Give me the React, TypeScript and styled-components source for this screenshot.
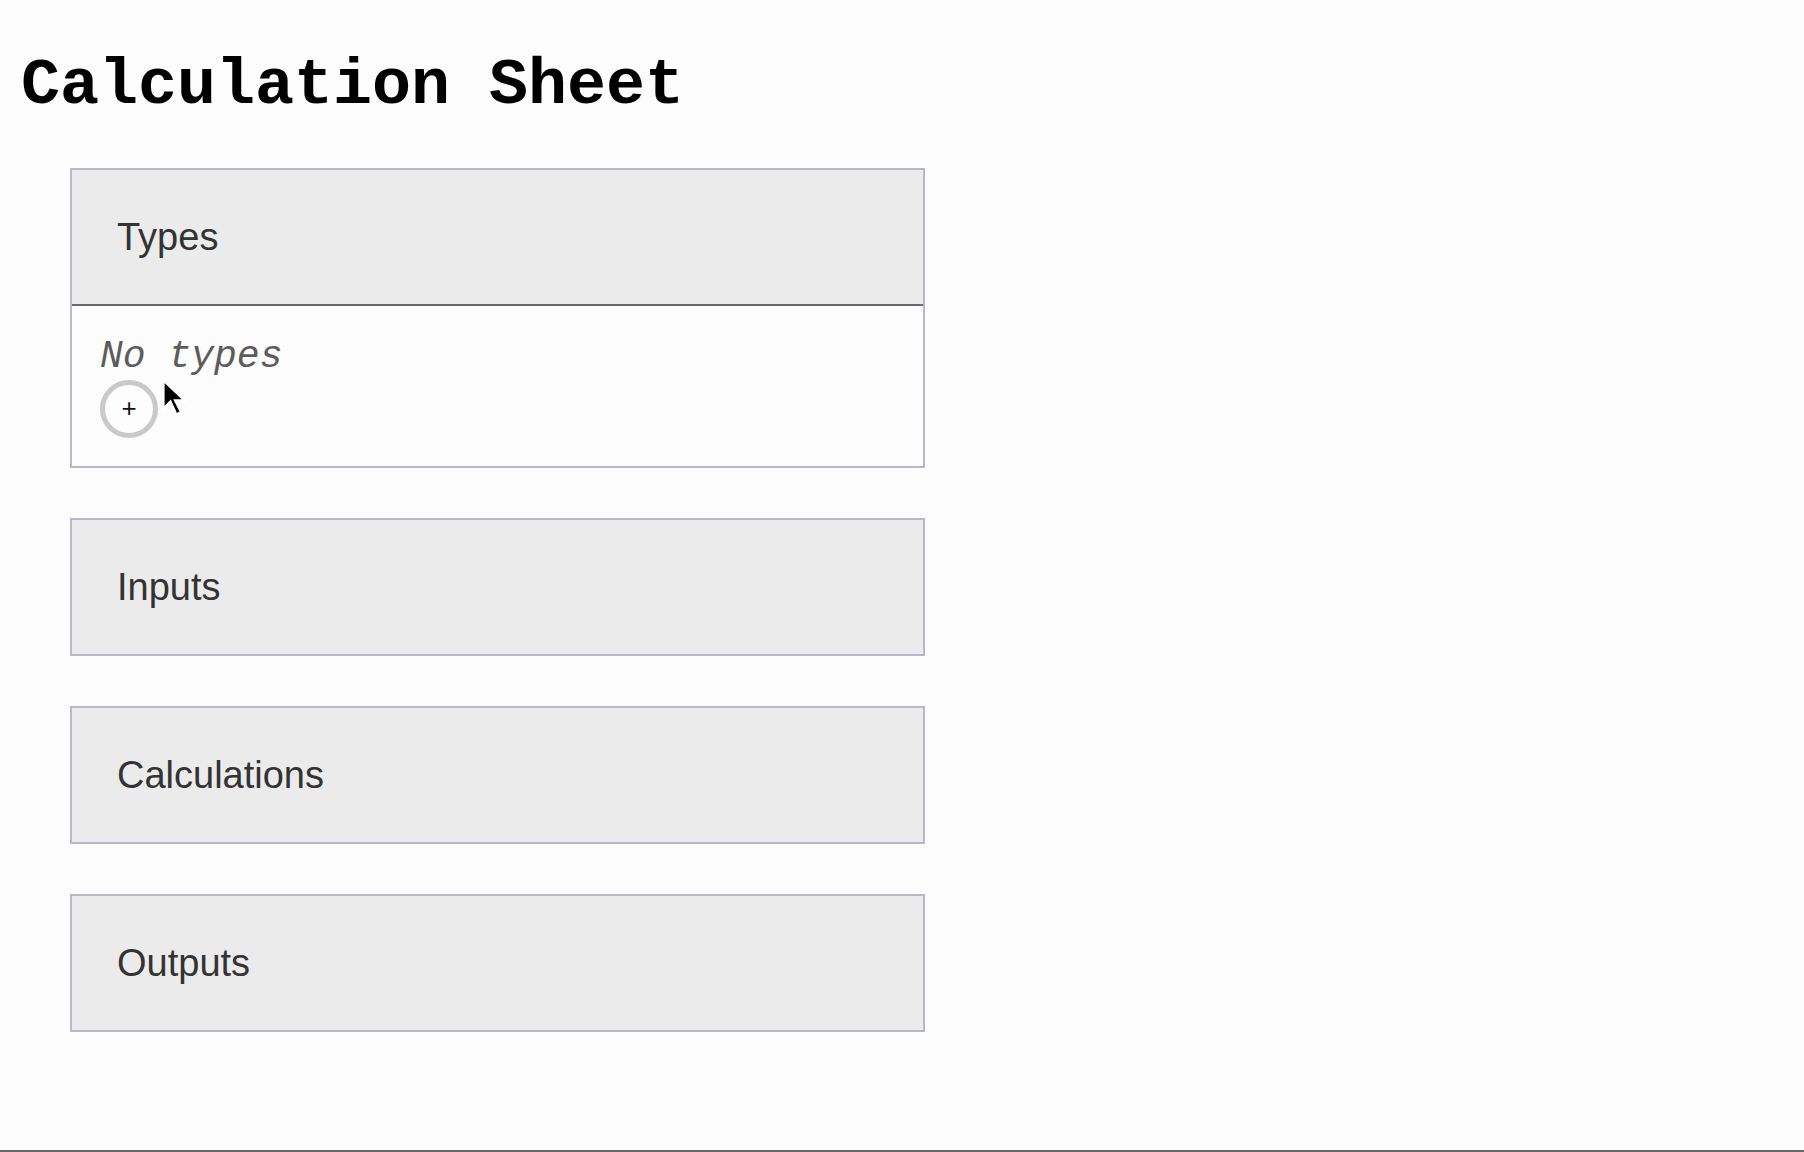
import React, { useState } from 'react'
import styled, { createGlobalStyle } from 'styled-components'

const GlobalStyle = createGlobalStyle`
  html, body {
    margin: 0;
    padding: 0;
    background-color: #fcfcfc;
  }
`

const Page = styled.div`
  box-sizing: border-box;
  min-height: 100vh;
  padding: 0 16px 40px;
  border-bottom: 2px solid #6a6a6a;
`

const Title = styled.h1`
  margin: 0 0 0 5px;
  padding-top: 54px;
  font-family: 'Liberation Mono', 'Courier New', monospace;
  font-size: 65px;
  line-height: 64px;
  font-weight: bold;
  color: #000;
`

const Sections = styled.div`
  display: flex;
  flex-direction: column;
  gap: 50px;
  width: 855px;
  margin: 50px 0 0 54px;
`

const Panel = styled.section`
  border: 2px solid #b6b6cc;
  background-color: #fcfcfc;
`

const PanelHeader = styled.div<{ $open: boolean }>`
  display: flex;
  align-items: center;
  height: 134px;
  padding-left: 45px;
  background-color: #ebebeb;
  border-bottom: ${p => (p.$open ? '2px solid #6a6a6a' : 'none')};
  font-family: 'Liberation Sans', Arial, sans-serif;
  font-size: 38px;
  color: #333;
  cursor: pointer;
`

const PanelBody = styled.div`
  position: relative;
  display: flex;
  flex-direction: column;
  align-items: flex-start;
  gap: 3px;
  padding: 31px 28px 28px;
`

const EmptyText = styled.div`
  font-family: 'Liberation Mono', 'Courier New', monospace;
  font-style: italic;
  font-size: 38px;
  line-height: 40px;
  color: #5c5c5c;
`

const AddButton = styled.button`
  box-sizing: border-box;
  width: 58px;
  height: 58px;
  border-radius: 50%;
  border: 5px solid #c9c9c9;
  background: #fdfdfd;
  font-family: 'Liberation Sans', Arial, sans-serif;
  font-size: 26px;
  line-height: 1;
  color: #111;
  padding: 0 0 2px;
  display: flex;
  align-items: center;
  justify-content: center;
`

const Cursor = styled.svg`
  position: absolute;
  left: 89px;
  top: 72px;
  width: 26px;
  height: 40px;
`

const sections = ['Types', 'Inputs', 'Calculations', 'Outputs']

export default function App() {
  const [open, setOpen] = useState<string | null>('Types')

  return (
    <Page>
      <GlobalStyle />
      <Title>Calculation Sheet</Title>
      <Sections>
        {sections.map(name => (
          <Panel key={name}>
            <PanelHeader $open={open === name} onClick={() => setOpen(open === name ? null : name)}>
              {name}
            </PanelHeader>
            {open === name && (
              <PanelBody>
                <EmptyText>No {name.toLowerCase()}</EmptyText>
                <AddButton>+</AddButton>
                <Cursor viewBox="0 0 22 34">
                  <path d="M2 2 L2 26 L8 20 L13 31 L17 29 L12 19 L20 19 Z" fill="#000" stroke="#fff" strokeWidth="2" />
                </Cursor>
              </PanelBody>
            )}
          </Panel>
        ))}
      </Sections>
    </Page>
  )
}
